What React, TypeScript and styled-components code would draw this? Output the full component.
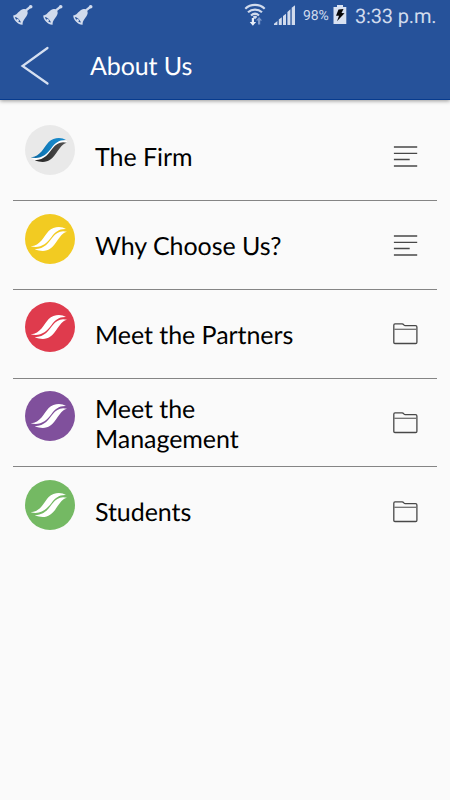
import React from 'react';
import styled, { createGlobalStyle } from 'styled-components';

const GlobalStyle = createGlobalStyle`
  * { box-sizing: border-box; }
  body { margin: 0; background: #fafafa; }
`;

const Screen = styled.div`
  width: 450px;
  height: 800px;
  overflow: hidden;
  background: #fafafa;
  font-family: Lato, sans-serif;
  text-rendering: geometricPrecision;
`;

const Header = styled.header`
  height: 100px;
  background: #26529a;
  border-bottom: 1px solid #073b8e;
  box-shadow: 0 1px 4px rgba(0, 0, 0, 0.4);
`;

const StatusBar = styled.div`
  display: flex;
  justify-content: space-between;
  height: 32px;
  padding: 0 13px 0 12px;
  color: #d1dbed;
  font-family: Roboto, sans-serif;
`;

const StatusGroup = styled.div`
  display: flex;
  align-items: flex-start;
`;

const StatusIcon = styled.svg<{ $top?: number; $right?: number }>`
  flex: none;
  display: block;
  margin-top: ${({ $top = 0 }) => $top}px;
  margin-right: ${({ $right = 0 }) => $right}px;
`;

const Percent = styled.span`
  width: 30px;
  font-size: 14px;
  line-height: 32px;
  letter-spacing: -0.1px;
  white-space: nowrap;
`;

const Clock = styled.span`
  width: 82px;
  font-size: 20px;
  line-height: 32px;
  letter-spacing: -0.15px;
  white-space: nowrap;
`;

const TitleBar = styled.div`
  display: flex;
  align-items: center;
  height: 67px;
  padding-left: 20px;
`;

const BackButton = styled.button`
  width: 70px;
  height: 44px;
  padding: 0;
  border: 0;
  background: none;
`;

const BackIcon = styled.svg`
  display: block;
  width: 32px;
  height: 44px;
`;

const Title = styled.h1`
  margin: 0;
  color: #fff;
  font-size: 25px;
  font-weight: 400;
  line-height: 30px;
  letter-spacing: -0.1px;
`;

const Menu = styled.main`
  padding: 12.5px 13px 0;
`;

const Row = styled.div`
  display: flex;
  align-items: center;
  height: 88.7px;
  padding: 0 19px 0 12px;
  border-bottom: 1px solid #858585;
  &:last-child { border-bottom-color: transparent; }
`;

const Badge = styled.svg`
  flex: none;
  align-self: flex-start;
  width: 50px;
  height: 50px;
  margin: 12.5px 20px 0 0;
`;

const Label = styled.span`
  width: 230px;
  padding-top: 2.2px;
  color: #000;
  font-size: 25px;
  line-height: 30px;
  letter-spacing: -0.05px;
`;

const RowIcon = styled.svg`
  display: block;
  width: 26px;
  height: 26px;
  margin-left: auto;
  margin-bottom: 0.6px;
`;

const BellIcon = () => (
  <StatusIcon width="22" height="22" viewBox="0 0 22 22" $top={4} $right={8}>
    <path d="M12.8 7.4 18.3 2.8" stroke="#d1dbed" strokeWidth="2.4" strokeLinecap="round" />
    <circle cx="18.7" cy="2.8" r="1.8" fill="#d1dbed" />
    <path d="M1.2 11.5C4.6 11.4 6.2 7.5 9.5 5.7c2-1.1 4.2-.6 5.4.9 1.3 1.7.9 3.6-.3 5.5-1.8 2.8-4.2 4.7-4 8.6C6.5 21 1.3 16.3 1.2 11.5Z" fill="#d1dbed" />
    <path d="M2.9 13c2.2.1 5.3 3 6 5.6-2.6-.5-5.4-3-6-5.6Z" fill="#26529a" />
    <circle cx="5.6" cy="16.4" r="1.3" fill="#d1dbed" />
  </StatusIcon>
);

const WifiIcon = () => (
  <StatusIcon width="22" height="24" viewBox="0 0 22 24" $top={3} $right={8}>
    <g fill="none" stroke="#d1dbed" strokeWidth="2.2">
      <path d="M1.3 5.7C6.6.7 15.4.7 20.7 5.7" />
      <path d="M4 9.3c4-3.7 10-3.7 14 0" />
      <path d="M7 12.5c2.4-2.1 5.6-2.1 8 0" />
    </g>
    <path d="M11 12.8c1.7 0 2.2 1.2 2.2 1.2L11 16.3 8.8 14s.5-1.2 2.2-1.2Z" fill="#d1dbed" />
    <path d="M7.8 15v4H5.7l3.2 3.7 3.2-3.7H10v-4Z" fill="#e8eef8" />
    <path d="M14 21.5v-4h-1.9l3-3.5 3 3.5h-1.9v4Z" fill="#7e9acb" />
  </StatusIcon>
);

const SignalIcon = () => (
  <StatusIcon width="21" height="21" viewBox="0 0 21 21" $top={5} $right={8} fill="#d1dbed">
    <path d="M0 20v-1.2L3.4 16v4ZM4.8 20v-5.5l3-2.2V20ZM9 20v-9l3-2.3V20ZM13.4 20V6.9l3-2.7V20ZM17.7 20V2.8L21 .2V20Z" />
  </StatusIcon>
);

const BatteryIcon = () => (
  <StatusIcon width="14" height="20" viewBox="0 0 14 20" $top={5} $right={8}>
    <path d="M4 0h6v2h3.3v17H.5V2H4Z" fill="#d9e2f2" />
    <path d="m5.5 4.5 5-.5-2 4 3 .2-7.5 8 2-5.4-3-.1Z" fill="#08080a" />
  </StatusIcon>
);

const TextIcon = () => (
  <RowIcon viewBox="0 0 26 26" stroke="#484848" strokeWidth="1.3">
    <path d="M1.9 4h23.3M1.9 10.3h23.3M1.9 16.5h15.8M1.9 23h23.3" />
  </RowIcon>
);

const FolderIcon = () => (
  <RowIcon viewBox="0 0 26 26" fill="none" stroke="#484848" strokeWidth="1.3" strokeLinejoin="round">
    <path d="M1.8 22.3V5.2q0-1.4 1.2-1.4h7.2q.9 0 1.3.8.5 1.1 1.5 1.1h10.5q1.4 0 1.4 1.3v15.3q0 1.2-1.2 1.2H3q-1.2 0-1.2-1.2Z" />
    <path d="M2.2 9.3h22.3" stroke="#707070" />
  </RowIcon>
);

interface Item {
  label: string;
  disc: string;
  upper?: string;
  lower?: string;
  kind: 'text' | 'folder';
}

const items: Item[] = [
  { label: 'The Firm', disc: '#e9e9e9', upper: 'url(#blueRibbon)', lower: 'url(#darkRibbon)', kind: 'text' },
  { label: 'Why Choose Us?', disc: '#f2cb22', kind: 'text' },
  { label: 'Meet the Partners', disc: '#df3b4d', kind: 'folder' },
  { label: 'Meet the Management', disc: '#80509c', kind: 'folder' },
  { label: 'Students', disc: '#74b963', kind: 'folder' },
];

const Emblem = ({ disc, upper = '#fff', lower = '#fff' }: Pick<Item, 'disc' | 'upper' | 'lower'>) => (
  <Badge viewBox="45 30 150 150">
    <defs>
      <linearGradient id="blueRibbon" x1="0" x2="1">
        <stop offset="0" stopColor="#08649e" />
        <stop offset=".6" stopColor="#1585c6" />
        <stop offset="1" stopColor="#1689cb" />
      </linearGradient>
      <linearGradient id="darkRibbon" x1="0" x2="1">
        <stop offset="0" stopColor="#202020" />
        <stop offset="1" stopColor="#555" />
      </linearGradient>
    </defs>
    <circle cx="120" cy="105" r="75" fill={disc} />
    {upper !== '#fff' && (
      <path d="M62 128C97 127 110 105 123 90C136 76 151 74 171 78L171 83C152 81 141 85 130 100C118 117 104 137 76 136Z" fill="#fff" />
    )}
    <path d="M62 127C92 125 101 97 116 81C130 67 154 65 168 75C147 74 136 84 125 98C108 120 92 134 62 127Z" fill={upper} />
    <path d="M74 136C105 135 117 114 128 100C139 85 152 78 171 83C157 87 151 97 143 108C124 139 106 148 74 136Z" fill={lower} />
  </Badge>
);

export default function App() {
  return (
    <>
      <GlobalStyle />
      <Screen>
        <Header>
          <StatusBar>
            <StatusGroup>
              <BellIcon />
              <BellIcon />
              <BellIcon />
            </StatusGroup>
            <StatusGroup>
              <WifiIcon />
              <SignalIcon />
              <Percent>98%</Percent>
              <BatteryIcon />
              <Clock>3:33 p.m.</Clock>
            </StatusGroup>
          </StatusBar>
          <TitleBar>
            <BackButton aria-label="Back">
              <BackIcon viewBox="0 0 32 44">
                <path d="M27.5 4 2.5 22 27.5 39.5" fill="none" stroke="#d6e0f1" strokeWidth="2.2" strokeLinecap="round" />
              </BackIcon>
            </BackButton>
            <Title>About Us</Title>
          </TitleBar>
        </Header>
        <Menu>
          {items.map((item) => (
            <Row key={item.label}>
              <Emblem disc={item.disc} upper={item.upper} lower={item.lower} />
              <Label>{item.label}</Label>
              {item.kind === 'text' ? <TextIcon /> : <FolderIcon />}
            </Row>
          ))}
        </Menu>
      </Screen>
    </>
  );
}
